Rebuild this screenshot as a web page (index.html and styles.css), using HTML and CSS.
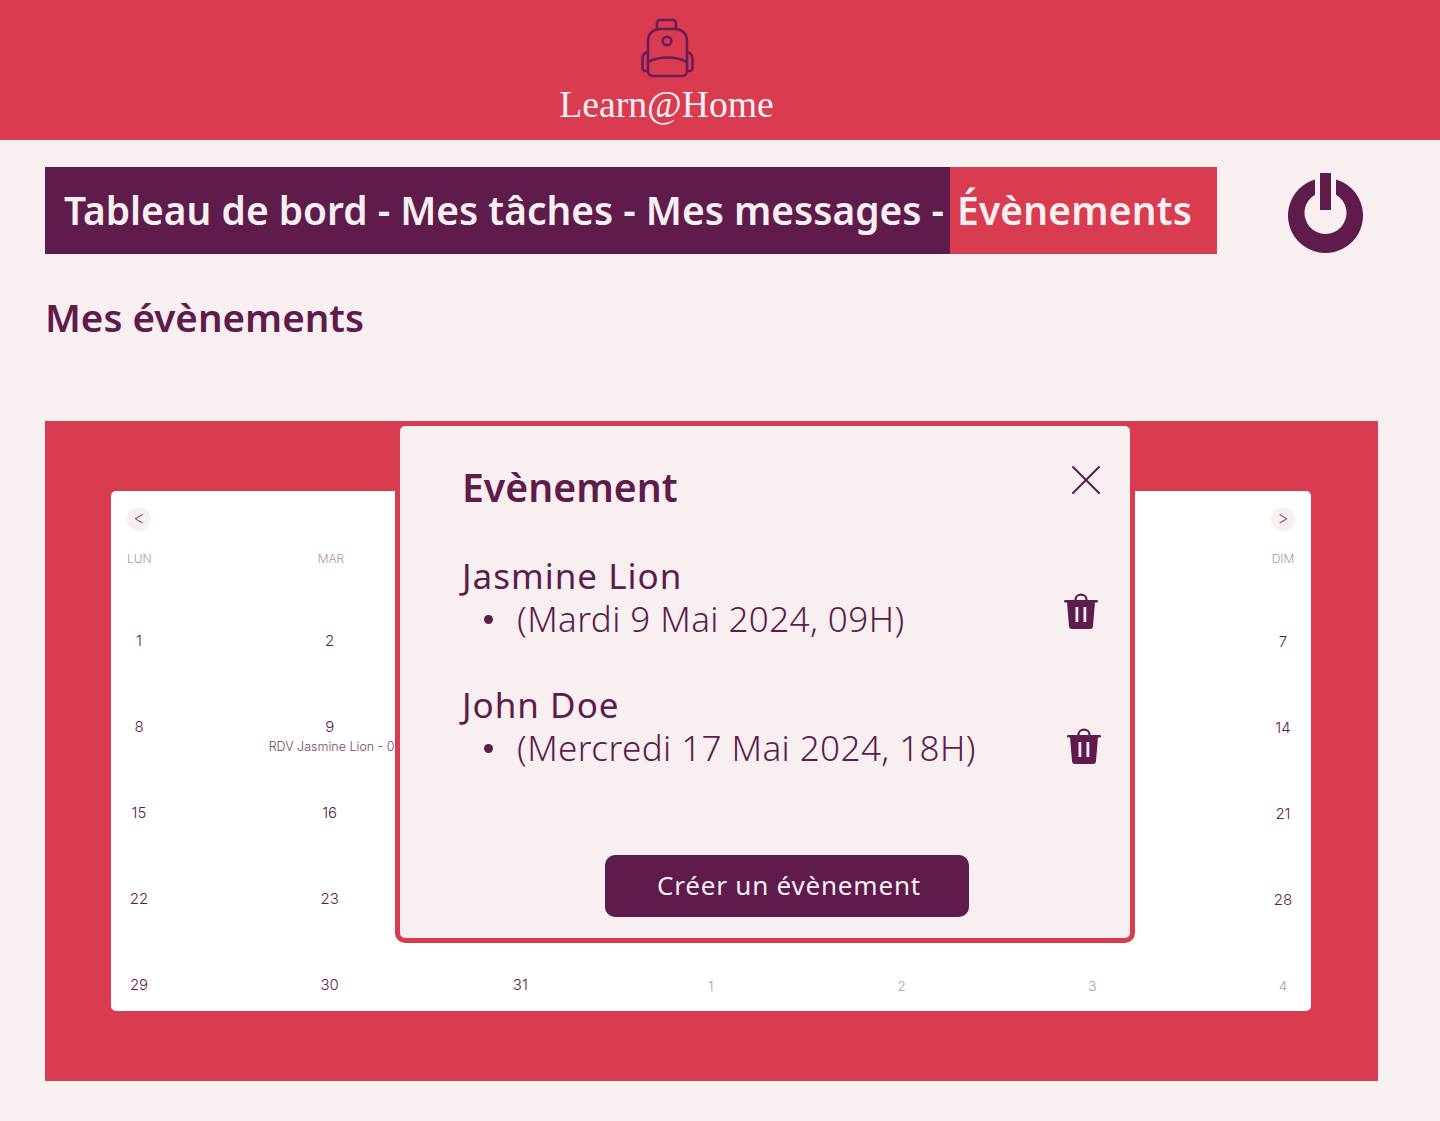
FILE: index.html
```html
<!DOCTYPE html>
<html lang="fr">
<head>
<meta charset="utf-8">
<title>Learn@Home</title>
<link rel="stylesheet" href="styles.css">
</head>
<body>
<header class="site-header">
  <svg class="logo-icon" viewBox="0 0 56 62" width="56" height="62" fill="none" stroke="#6a1b5a" stroke-width="2.500" stroke-linejoin="round" stroke-linecap="round">
    <path d="M9 23C9 15 15 11 21 11H36C42 11 48 15 48 23V53a5 5 0 0 1-5 5H14a5 5 0 0 1-5-5Z"/>
    <path d="M18 11V5a3 3 0 0 1 3-3H34a3 3 0 0 1 3 3V11"/>
    <path d="M9 34C5 35 3.500 38 3.500 41V50a3 3 0 0 0 3 3H9"/>
    <path d="M48 34C52 35 53.500 38 53.500 41V50a3 3 0 0 1-3 3H48"/>
    <path d="M9 44C20 38 37 38 48 44"/>
    <circle cx="28" cy="23" r="4.300"/>
  </svg>
  <div class="logo-text">Learn@Home</div>
</header>
<main class="page">
  <div class="topbar">
    <nav class="tabs">
      <a class="tab tab-main">Tableau de bord - Mes tâches - Mes messages -</a>
      <a class="tab tab-active">Évènements</a>
    </nav>
    <svg class="power" viewBox="0 0 75 80" width="75" height="80">
      <path fill="#5e1b4b" d="M27 6.500V21.700A21 21 0 1 0 48 21.700V6.500A37.500 37.500 0 1 1 27 6.500Z"/>
      <rect fill="#5e1b4b" x="32" y="0" width="11" height="37"/>
    </svg>
  </div>
  <h1 class="page-title">Mes évènements</h1>
  <section class="panel">
    <div class="calendar">
      <div class="cal-nav">
        <span class="cal-arrow">&lt;</span>
        <span class="cal-arrow">&gt;</span>
      </div>
      <div class="cal-days">
        <span>LUN</span><span>MAR</span><span></span><span></span><span></span><span></span><span>DIM</span>
      </div>
      <div class="cal-grid">
        <div class="cell">1</div><div class="cell">2</div><div class="cell"></div><div class="cell"></div><div class="cell"></div><div class="cell"></div><div class="cell low">7</div>
        <div class="cell">8</div><div class="cell">9<div class="cal-event">RDV Jasmine Lion - 0</div></div><div class="cell"></div><div class="cell"></div><div class="cell"></div><div class="cell"></div><div class="cell low">14</div>
        <div class="cell">15</div><div class="cell">16</div><div class="cell"></div><div class="cell"></div><div class="cell"></div><div class="cell"></div><div class="cell low">21</div>
        <div class="cell">22</div><div class="cell">23</div><div class="cell"></div><div class="cell"></div><div class="cell"></div><div class="cell"></div><div class="cell low">28</div>
        <div class="cell">29</div><div class="cell">30</div><div class="cell">31</div><div class="cell low muted">1</div><div class="cell low muted">2</div><div class="cell low muted">3</div><div class="cell low muted">4</div>
      </div>
    </div>
    <div class="modal">
      <div class="modal-head">
        <h2 class="modal-title">Evènement</h2>
        <svg class="close" viewBox="0 0 30 30" width="30" height="30" fill="none" stroke="#5e1b4b" stroke-width="2" stroke-linecap="round">
          <path d="M2 2 28 28M28 2 2 28"/>
        </svg>
      </div>
      <div class="event">
        <div class="event-text">
          <div class="event-name">Jasmine Lion</div>
          <ul class="event-list"><li>(Mardi 9 Mai 2024, 09H)</li></ul>
        </div>
        <svg class="trash trash-a" viewBox="0 0 34 37" width="34" height="37">
          <path fill="none" stroke="#5e1b4b" stroke-width="2.200" d="M11.500 8V6.500a5.500 4.800 0 0 1 11 0V8"/>
          <rect fill="#5e1b4b" x="0" y="7" width="34" height="2.600" rx="1.300"/>
          <path fill="#5e1b4b" fill-rule="evenodd" d="M3 9H31L29 33a3 3 0 0 1-3 3H8a3 3 0 0 1-3-3ZM11.500 14V29h2.800V14ZM19.500 14V29h2.800V14Z"/>
        </svg>
      </div>
      <div class="event event-second">
        <div class="event-text">
          <div class="event-name">John Doe</div>
          <ul class="event-list"><li>(Mercredi 17 Mai 2024, 18H)</li></ul>
        </div>
        <svg class="trash trash-b" viewBox="0 0 34 37" width="34" height="37">
          <path fill="none" stroke="#5e1b4b" stroke-width="2.200" d="M11.500 8V6.500a5.500 4.800 0 0 1 11 0V8"/>
          <rect fill="#5e1b4b" x="0" y="7" width="34" height="2.600" rx="1.300"/>
          <path fill="#5e1b4b" fill-rule="evenodd" d="M3 9H31L29 33a3 3 0 0 1-3 3H8a3 3 0 0 1-3-3ZM11.500 14V29h2.800V14ZM19.500 14V29h2.800V14Z"/>
        </svg>
      </div>
      <button class="create" type="button">Créer un évènement</button>
    </div>
  </section>
</main>
</body>
</html>
```
FILE: styles.css
```css
* { box-sizing: border-box; }
html, body { margin: 0; padding: 0; }
body {
  background: #f8eff1;
  color: #5e1b4b;
  font-family: "Noto Sans", sans-serif;
  height: 1121px;
  overflow: hidden;
}
.site-header {
  height: 140px;
  background: #d93b50;
  display: flex;
  flex-direction: column;
  align-items: center;
  padding: 18px 107px 0 0;
}
.logo-icon { display: block; }
.logo-text {
  font-family: "Liberation Serif", serif;
  color: #fbeff2;
  font-size: 37.700px;
  line-height: 44px;
  margin-top: 2px;
}
.page { padding: 27px 62px 0 45px; }
.topbar { display: flex; align-items: flex-start; height: 87px; }
.tabs {
  display: flex;
  width: 1172px;
  height: 87px;
  font-size: 38.900px;
  font-weight: 600;
  line-height: 86px;
  color: #f8eff1;
}
.tab { display: block; white-space: nowrap; }
.tab-main { width: 905px; padding-left: 19px; background: #5e1b4b; }
.tab-active { flex: 1; padding-left: 7px; background: #d93b50; letter-spacing: .2px; }
.power { margin: 6px 0 0 71px; }
.page-title {
  margin: 42px 0 0 0;
  font-size: 38.600px;
  font-weight: 600;
  line-height: 42px;
  height: 125px;
}
.panel {
  position: relative;
  height: 660px;
  background: #d93b50;
  padding: 70px 67px 70px 66px;
}
.calendar {
  height: 520px;
  background: #fff;
  border-radius: 5px;
  padding: 16px;
  font-family: Inter, sans-serif;
  font-weight: 300;
}
.cal-nav { display: flex; justify-content: space-between; height: 24px; }
.cal-arrow {
  width: 24px;
  height: 24px;
  border-radius: 50%;
  background: #f8eff1;
  font-size: 18px;
  font-weight: 200;
  line-height: 22px;
  text-align: center;
}
.cal-days {
  display: grid;
  grid-template-columns: repeat(7, 24px);
  justify-content: space-between;
  margin-top: 20px;
  font-size: 12px;
  line-height: 16px;
  text-align: center;
  white-space: nowrap;
  color: #b592ad;
}
.cal-grid {
  display: grid;
  grid-template-columns: repeat(7, 24px);
  grid-auto-rows: 20px;
  row-gap: 66px;
  justify-content: space-between;
  margin-top: 64px;
  font-size: 15px;
  line-height: 20px;
  text-align: center;
}
.low { padding-top: 1px; }
.muted { color: #b592ad; font-size: 13.500px; }
.cal-event {
  margin-left: -49px;
  font-size: 12.500px;
  line-height: 20px;
  text-align: left;
  white-space: nowrap;
  opacity: .85;
}
.modal {
  position: absolute;
  left: 350px;
  top: 0;
  width: 740px;
  height: 522px;
  background: #f8eff1;
  border: 5px solid #d93b50;
  border-radius: 10px;
  padding: 37px 29px 0 62px;
}
.modal-head { display: flex; justify-content: space-between; align-items: flex-start; }
.modal-title { margin: 0; font-size: 39.200px; font-weight: 600; line-height: 48px; }
.close { margin-top: 2px; }
.event {
  display: flex;
  justify-content: space-between;
  align-items: flex-start;
  margin-top: 43px;
}
.event-second { margin-top: 43px; }
.event-name { font-size: 35px; line-height: 43px; letter-spacing: 1px; }
.event-list {
  margin: 0;
  padding: 0 0 0 55px;
  list-style: none;
  font-size: 35px;
  font-weight: 300;
  line-height: 43px;
  letter-spacing: .42px;
}
.event-list li { position: relative; }
.event-list li::before {
  content: "";
  position: absolute;
  left: -33px;
  top: 18px;
  width: 9px;
  height: 9px;
  border-radius: 50%;
  background: #5e1b4b;
}
.trash { display: block; }
.trash-a { margin: 39px 3px 0 0; }
.trash-b { margin: 45px 0 0 0; }
.create {
  display: block;
  width: 364px;
  height: 62px;
  margin: 86px 0 0 143px;
  padding: 0 0 2px 4px;
  background: #5e1b4b;
  color: #f8eff1;
  border: 0;
  border-radius: 10px;
  font-family: "Noto Sans", sans-serif;
  font-size: 26px;
  letter-spacing: .8px;
}
```
